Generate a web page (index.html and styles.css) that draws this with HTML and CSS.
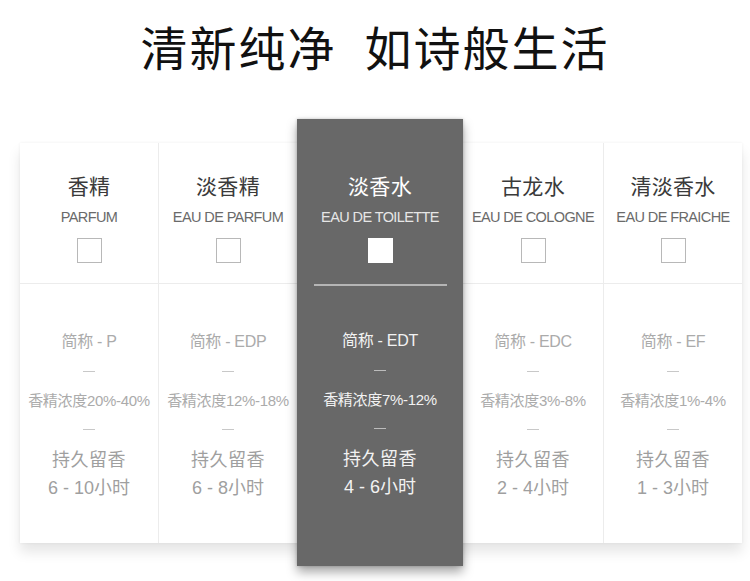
FILE: index.html
```html
<!DOCTYPE html>
<html lang="zh">
<head>
<meta charset="utf-8">
<title>清新纯净 如诗般生活</title>
<link rel="stylesheet" href="styles.css">
</head>
<body>
<h1 class="title"><span>清新纯净</span><span class="gap"></span><span>如诗般生活</span></h1>
<div class="table">
  <div class="col w1">
    <div class="head">
      <div class="cn">香精</div>
      <div class="en">PARFUM</div>
      <div class="box"></div>
    </div>
    <div class="body">
      <div class="abbr">简称 - P</div>
      <div class="dash"><i></i></div>
      <div class="conc">香精浓度20%-40%</div>
      <div class="dash d2"><i></i></div>
      <div class="last">持久留香</div>
      <div class="hours">6 - 10小时</div>
    </div>
  </div>
  <div class="col w2 sep">
    <div class="head">
      <div class="cn">淡香精</div>
      <div class="en">EAU DE PARFUM</div>
      <div class="box"></div>
    </div>
    <div class="body">
      <div class="abbr">简称 - EDP</div>
      <div class="dash"><i></i></div>
      <div class="conc">香精浓度12%-18%</div>
      <div class="dash d2"><i></i></div>
      <div class="last">持久留香</div>
      <div class="hours">6 - 8小时</div>
    </div>
  </div>
  <div class="col hl">
    <div class="head">
      <div class="cn">淡香水</div>
      <div class="en">EAU DE TOILETTE</div>
      <div class="box"></div>
    </div>
    <div class="body">
      <div class="abbr">简称 - EDT</div>
      <div class="dash"><i></i></div>
      <div class="conc">香精浓度7%-12%</div>
      <div class="dash d2"><i></i></div>
      <div class="last">持久留香</div>
      <div class="hours">4 - 6小时</div>
    </div>
  </div>
  <div class="col w4">
    <div class="head">
      <div class="cn">古龙水</div>
      <div class="en">EAU DE COLOGNE</div>
      <div class="box"></div>
    </div>
    <div class="body">
      <div class="abbr">简称 - EDC</div>
      <div class="dash"><i></i></div>
      <div class="conc">香精浓度3%-8%</div>
      <div class="dash d2"><i></i></div>
      <div class="last">持久留香</div>
      <div class="hours">2 - 4小时</div>
    </div>
  </div>
  <div class="col w5 sep">
    <div class="head">
      <div class="cn">清淡香水</div>
      <div class="en">EAU DE FRAICHE</div>
      <div class="box"></div>
    </div>
    <div class="body">
      <div class="abbr">简称 - EF</div>
      <div class="dash"><i></i></div>
      <div class="conc">香精浓度1%-4%</div>
      <div class="dash d2"><i></i></div>
      <div class="last">持久留香</div>
      <div class="hours">1 - 3小时</div>
    </div>
  </div>
</div>
</body>
</html>
```
FILE: styles.css
```css
* { box-sizing: border-box; }
html, body { margin: 0; padding: 0; background: #fff; }
body {
  width: 750px;
  height: 581px;
  overflow: hidden;
  font-family: "Liberation Sans", "Noto Sans CJK SC", sans-serif;
}
.title {
  margin: 0 0 49px 0;
  height: 94px;
  line-height: 92px;
  text-align: center;
  font-family: "Noto Sans CJK SC", sans-serif;
  font-weight: 400;
  font-size: 47px;
  letter-spacing: 2px;
  color: #111;
}
.title .gap { display: inline-block; width: 28px; }
.table {
  display: flex;
  margin-left: 20px;
  width: 722px;
  background: #fff;
  box-shadow: 0 9px 12px rgba(0,0,0,0.10), 0 0 3px rgba(0,0,0,0.06);
}
.col { text-align: center; }
.w1 { width: 138px; }
.w2 { width: 139px; }
.w4 { width: 140px; }
.w5 { width: 139px; }
.sep { border-left: 1px solid #ececec; }
.head {
  height: 141px;
  padding-top: 30px;
  border-bottom: 1px solid #ececec;
}
.cn {
  font-family: "Noto Sans CJK SC", sans-serif;
  font-size: 21px;
  line-height: 24px;
  color: #3a3a3a;
  letter-spacing: 0.3px;
}
.en {
  margin-top: 11px;
  font-size: 14.5px;
  line-height: 18px;
  letter-spacing: -0.6px;
  color: #6a6a6a;
  white-space: nowrap;
}
.box {
  width: 25px;
  height: 25px;
  margin: 12px auto 0;
  border: 1px solid #b8b8b8;
}
.body { height: 259px; padding-top: 44px; color: #ababab; white-space: nowrap; }
.abbr {
  font-size: 16px;
  line-height: 28px;
  letter-spacing: -0.3px;
}
.dash { height: 30px; display: flex; align-items: center; justify-content: center; }
.dash i { display: block; width: 12px; height: 1px; background: #c8c8c8; }
.dash.d2 { height: 26px; }
.conc {
  font-size: 15px;
  line-height: 30px;
  letter-spacing: -0.3px;
}
.last {
  font-family: "Noto Sans CJK SC", sans-serif;
  font-size: 18px;
  line-height: 32px;
  letter-spacing: 0.5px;
  color: #9f9f9f;
}
.hours {
  font-size: 18px;
  line-height: 28px;
  color: #9f9f9f;
}
.hl {
  position: relative;
  z-index: 1;
  width: 166px;
  margin-top: -24px;
  margin-bottom: -23px;
  background: #686868;
  box-shadow: 0 6px 10px rgba(0,0,0,0.35), 0 0 3px rgba(0,0,0,0.2);
}
.hl .head {
  height: 167px;
  padding-top: 54px;
  border-bottom: none;
  position: relative;
}
.hl .head::after {
  content: "";
  position: absolute;
  left: 17px;
  right: 16px;
  bottom: 0;
  height: 2px;
  background: #b5b5b5;
}
.hl .cn { color: #fff; }
.hl .en { color: #e6e6e6; }
.hl .box { background: #fff; border-color: #fff; }
.hl .body { padding-top: 41px; color: #f2f2f2; }
.hl .dash i { background: #bcbcbc; }
.hl .last, .hl .hours { color: #f2f2f2; }
```
